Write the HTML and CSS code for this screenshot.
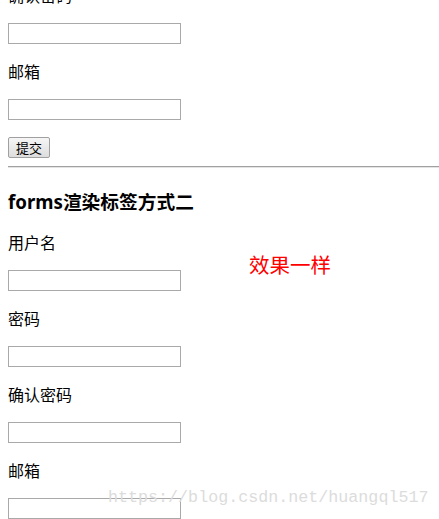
FILE: index.html
```html
<!DOCTYPE html>
<html lang="zh-CN">
<head>
  <meta charset="UTF-8">
  <title>forms渲染标签</title>
  <link rel="stylesheet" href="styles.css">
</head>
<body>
  <div class="page">
    <form class="form-block">
      <p class="field-label">确认密码</p>
      <div class="field-row"><input type="password" class="field-input"></div>
      <p class="field-label">邮箱</p>
      <div class="field-row"><input type="text" class="field-input"></div>
      <div class="submit-row"><button type="button" class="submit-btn">提交</button></div>
    </form>

    <hr class="divider">

    <h3 class="section-title">forms渲染标签方式二</h3>
    <form class="form-block">
      <p class="field-label">用户名</p>
      <div class="field-row"><input type="text" class="field-input"></div>
      <p class="field-label">密码</p>
      <div class="field-row"><input type="password" class="field-input"></div>
      <p class="field-label">确认密码</p>
      <div class="field-row"><input type="password" class="field-input"></div>
      <p class="field-label">邮箱</p>
      <div class="field-row"><input type="text" class="field-input"></div>
    </form>
  </div>

  <div class="note">效果一样</div>
  <div class="watermark">https://blog.csdn.net/huangql517</div>
</body>
</html>
```

FILE: styles.css
```css
html, body {
  overflow: hidden;
}
body {
  margin: 0;
  padding: 0 8px;
  font-family: "Noto Sans", "Noto Sans CJK SC", sans-serif;
  font-size: 16px;
  color: #000;
  background: #fff;
}
.page {
  margin-top: -15px;
}
.form-block {
  margin: 0;
}
.field-label {
  margin: 0 0 16px;
  height: 22px;
  line-height: 22px;
}
.field-row {
  height: 22px;
  margin-bottom: 16px;
}
.field-input {
  display: block;
  box-sizing: border-box;
  width: 173px;
  height: 21px;
  margin: 0;
  padding: 1px 2px;
  border: 1px solid #a9a9a9;
  background: #fff;
}
.submit-row {
  height: 21px;
}
.submit-btn {
  display: block;
  box-sizing: border-box;
  width: 42px;
  height: 21px;
  padding: 0;
  margin: 0;
  font-family: "Noto Sans CJK SC", sans-serif;
  font-size: 13px;
  line-height: 19px;
  color: #000;
  background: linear-gradient(#f6f6f6, #dddddd);
  border: 1px solid #a0a0a0;
  border-radius: 2px;
}
.divider {
  margin: 8px -8px 0 0;
  height: 0;
  border: none;
  border-top: 1px solid #a0a0a0;
  border-bottom: 1px solid #e4e4e4;
}
.section-title {
  margin: 21px 0 18px;
  font-size: 18.72px;
  line-height: 25px;
  font-weight: bold;
}
.note {
  position: absolute;
  left: 249px;
  top: 250px;
  font-family: "Noto Sans CJK SC", sans-serif;
  font-size: 20.5px;
  line-height: 28px;
  color: #ff0000;
}
.watermark {
  position: absolute;
  left: 108px;
  top: 486px;
  font-family: "Liberation Mono", monospace;
  font-size: 16.7px;
  line-height: 24px;
  color: #dcdcdc;
}
```
